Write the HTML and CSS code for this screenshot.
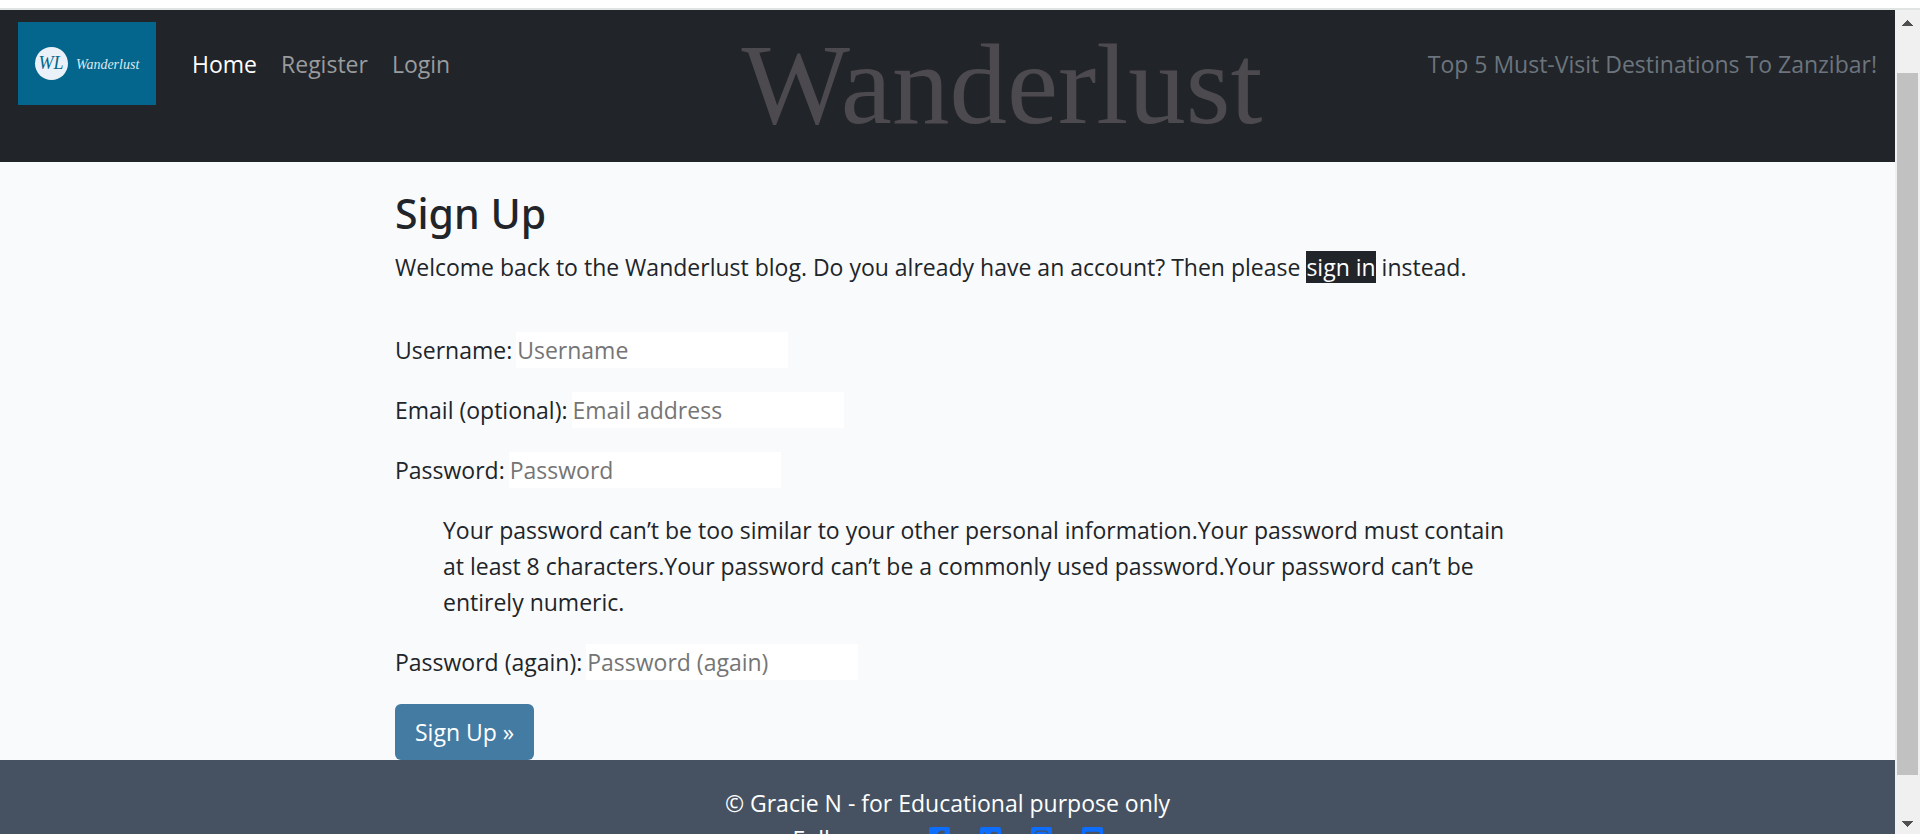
FILE: index.html
```html
<!DOCTYPE html>
<html lang="en">
<head>
<meta charset="utf-8">
<meta name="viewport" content="width=device-width, initial-scale=1">
<title>Wanderlust - Sign Up</title>
<link rel="stylesheet" href="styles.css">
</head>
<body>
<div class="chrome-edge"></div>
<div class="viewport">
  <div class="page">
    <header class="navbar">
      <a class="brand" href="#" aria-label="Wanderlust">
        <svg class="brand-logo" viewBox="0 0 138 83" role="img" aria-label="WL Wanderlust">
          <rect width="138" height="83" fill="#04668c"/>
          <circle cx="33.5" cy="41.5" r="16.5" fill="#ebf1f9"/>
          <text class="logo-mark" x="33" y="47" text-anchor="middle">WL</text>
          <text class="logo-name" x="58" y="47">Wanderlust</text>
        </svg>
      </a>
      <nav class="nav">
        <a class="nav-link active" href="#">Home</a>
        <a class="nav-link" href="#">Register</a>
        <a class="nav-link" href="#">Login</a>
      </nav>
      <div class="site-title">Wanderlust</div>
      <span class="tagline">Top 5 Must-Visit Destinations To Zanzibar!</span>
    </header>
    <main class="content">
      <h1 class="title">Sign Up</h1>
      <p class="intro">Welcome back to the Wanderlust blog. Do you already have an account? Then please <a class="signin" href="#">sign in</a> instead.</p>
      <form class="form">
        <div class="field"><label for="username">Username:</label> <input class="input" id="username" type="text" placeholder="Username"></div>
        <div class="field"><label for="email">Email (optional):</label> <input class="input" id="email" type="email" placeholder="Email address"></div>
        <div class="field"><label for="password1">Password:</label> <input class="input" id="password1" type="password" placeholder="Password"></div>
        <p class="hints">Your password can’t be too similar to your other personal information.Your password must contain at least 8 characters.Your password can’t be a commonly used password.Your password can’t be entirely numeric.</p>
        <div class="field"><label for="password2">Password (again):</label> <input class="input" id="password2" type="password" placeholder="Password (again)"></div>
        <button class="submit" type="submit">Sign Up »</button>
      </form>
    </main>
    <footer class="footer">
      <p class="copy">© Gracie N - for Educational purpose only</p>
      <div class="social">
        <span>Follow us:</span>
        <a class="social-link" href="#" aria-label="Facebook"><svg viewBox="0 0 448 448"><path fill="#0d6efd" d="M400 0H48A48 48 0 0 0 0 48v352a48 48 0 0 0 48 48h137V296h-63v-72h63v-55c0-62 37-96 94-96 27 0 55 5 55 5v61h-31c-31 0-40 19-40 39v46h68l-11 72h-57v152h137a48 48 0 0 0 48-48V48A48 48 0 0 0 400 0z"/></svg></a>
        <a class="social-link" href="#" aria-label="Twitter"><svg viewBox="0 0 448 448"><path fill="#0d6efd" fill-rule="evenodd" d="M48 0h352a48 48 0 0 1 48 48v352a48 48 0 0 1-48 48H48a48 48 0 0 1-48-48V48A48 48 0 0 1 48 0zm303 159c13-9 24-21 33-34-12 5-25 9-38 10 14-8 24-21 29-36-13 8-27 13-42 16-44-46-121-11-112 60-53-3-101-28-135-68-17 31-10 68 21 88-11 0-21-4-30-8 0 32 22 59 53 65-10 2-19 3-30 1 9 26 33 45 61 46-27 21-60 31-97 28 89 56 287 20 287-168z"/></svg></a>
        <a class="social-link" href="#" aria-label="Instagram"><svg viewBox="0 0 448 448"><rect width="448" height="448" rx="48" fill="#0d6efd"/><rect x="88" y="88" width="272" height="272" rx="66" fill="none" stroke="#465262" stroke-width="30"/><circle cx="224" cy="224" r="64" fill="none" stroke="#465262" stroke-width="28"/><circle cx="300" cy="150" r="17" fill="#465262"/></svg></a>
        <a class="social-link" href="#" aria-label="YouTube"><svg viewBox="0 0 448 448"><rect width="448" height="448" rx="48" fill="#0d6efd"/><rect x="60" y="100" width="328" height="248" rx="52" fill="#465262"/><path fill="#0d6efd" d="M186 164v120l104-60z"/></svg></a>
      </div>
    </footer>
  </div>
  <div class="scrollbar" aria-hidden="true">
    <svg class="arrow" viewBox="0 0 11 6" shape-rendering="crispEdges"><path fill="#505050" d="M5 0h1l5 6H0z"/></svg>
    <div class="track"><div class="thumb"></div></div>
    <svg class="arrow" viewBox="0 0 11 6" shape-rendering="crispEdges"><path fill="#505050" d="M0 0h11L6 6H5z"/></svg>
  </div>
</div>
</body>
</html>
```
FILE: styles.css
```css
* {
  box-sizing: border-box;
}

body {
  display: flex;
  flex-direction: column;
  height: 100vh;
  margin: 0;
  overflow: hidden;
  background: #ffffff;
  color: #212529;
  font-family: "Open Sans", "Noto Sans", sans-serif;
  font-size: 23px;
  line-height: 36px;
}

p,
h1 {
  margin: 0;
}

a {
  text-decoration: none;
}

/* Browser frame */
.chrome-edge {
  flex: none;
  height: 10px;
  border-bottom: 2px solid #e0e4e2;
}

.viewport {
  display: flex;
  flex: 1;
  min-height: 0;
}

.page {
  flex: 1;
  overflow: hidden;
  background: #f9fafc;
}

/* Header */
.navbar {
  display: flex;
  align-items: flex-start;
  padding: 12px 18px 0;
  min-height: 152px;
  background: #212429;
}

.brand-logo {
  display: block;
  width: 138px;
  height: 83px;
}

.logo-mark,
.logo-name {
  font-family: "Liberation Serif", serif;
  font-style: italic;
}

.logo-mark {
  fill: #04668c;
  font-size: 18px;
}

.logo-name {
  fill: #dce9f3;
  font-size: 14px;
}

.nav {
  display: flex;
  gap: 24px;
  padding: 24px 0 0 36px;
}

.nav-link {
  color: #999b9d;
}

.nav-link.active {
  color: #ffffff;
}

.site-title {
  flex: 1;
  padding-left: 126px;
  color: #4c4a4e;
  font-family: "Liberation Serif", serif;
  font-size: 115px;
  line-height: 126px;
  text-align: center;
}

.tagline {
  padding-top: 24px;
  color: #6c757d;
  white-space: nowrap;
}

/* Sign-up form */
.content {
  max-width: 1105px;
  margin: 0 auto;
  padding-top: 26px;
}

.title {
  margin-bottom: 11px;
  font-family: "Noto Sans", sans-serif;
  font-size: 41px;
  font-weight: 500;
  line-height: 50px;
}

.signin {
  background: #212429;
  color: #ffffff;
}

.form {
  display: flex;
  flex-direction: column;
  align-items: flex-start;
  gap: 24px;
  padding-top: 47px;
}

.field {
  display: flex;
  gap: 4px;
}

.input {
  width: 272px;
  height: 36px;
  padding: 0 1px;
  border: 0;
  background: #ffffff;
  color: #212529;
  font: inherit;
}

.input::placeholder {
  color: #757575;
}

.hints {
  margin-right: -24px;
  padding-left: 48px;
}

.submit {
  padding: 10px 20px;
  border: 0;
  border-radius: 6px;
  background: #447ba3;
  color: #ffffff;
  font: inherit;
}

/* Footer */
.footer {
  padding: 25px 0;
  background: #465262;
  color: #ffffff;
  text-align: center;
}

.social {
  display: flex;
  align-items: center;
  justify-content: center;
  gap: 30px;
}

.social-link svg {
  display: block;
  width: 21px;
  height: 21px;
  margin-bottom: 4px;
}

/* Scrollbar */
.scrollbar {
  display: flex;
  flex-direction: column;
  align-items: center;
  width: 25px;
  padding: 10px 0 7px;
  background: #f0f0f0;
}

.arrow {
  flex: none;
  width: 11px;
  height: 6px;
}

.track {
  flex: 1;
  width: 21px;
  padding: 47px 0 46px;
}

.thumb {
  height: 100%;
  background: #c1c1c1;
}
```
